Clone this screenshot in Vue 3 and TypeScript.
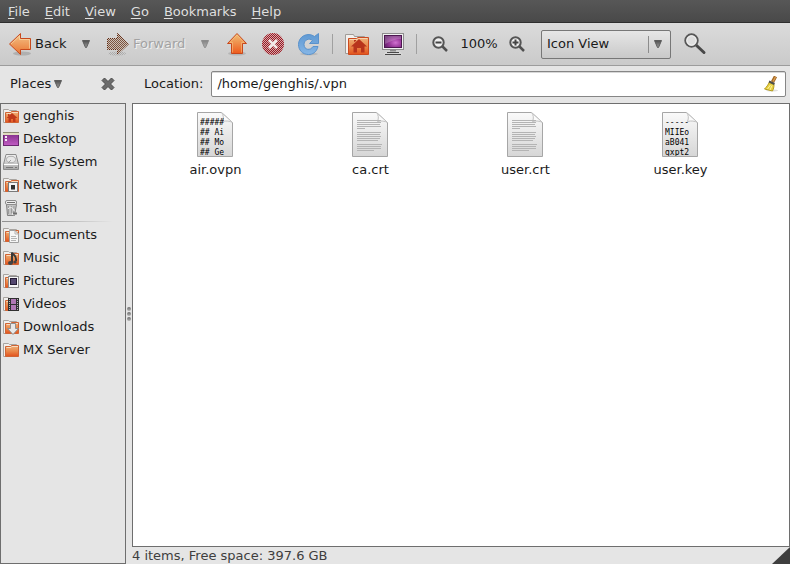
<script setup lang="ts">
import { ref } from 'vue'

interface Menu {
  key: string
  rest: string
}

interface Place {
  icon: string
  label: string
}

interface FileItem {
  name: string
  preview?: string[]
}

const menus: Menu[] = [
  { key: 'F', rest: 'ile' },
  { key: 'E', rest: 'dit' },
  { key: 'V', rest: 'iew' },
  { key: 'G', rest: 'o' },
  { key: 'B', rest: 'ookmarks' },
  { key: 'H', rest: 'elp' },
]

const placeGroups: Place[][] = [
  [
    { icon: 'home', label: 'genghis' },
    { icon: 'desktop', label: 'Desktop' },
    { icon: 'drive', label: 'File System' },
    { icon: 'network', label: 'Network' },
    { icon: 'trash', label: 'Trash' },
  ],
  [
    { icon: 'documents', label: 'Documents' },
    { icon: 'music', label: 'Music' },
    { icon: 'pictures', label: 'Pictures' },
    { icon: 'videos', label: 'Videos' },
    { icon: 'downloads', label: 'Downloads' },
    { icon: 'folder', label: 'MX Server' },
  ],
]

const files: FileItem[] = [
  { name: 'air.ovpn', preview: ['#####', '## Ai', '## Mo', '## Ge'] },
  { name: 'ca.crt' },
  { name: 'user.crt' },
  { name: 'user.key', preview: ['-----', 'MIIEo', 'aB041', 'gxpt2'] },
]

const textLines: number[][] = [
  [8, 24], [10, 24], [12, 23], [14, 24], [16, 8],
  [20, 24], [22, 23], [24, 24], [26, 23], [28, 21],
  [32, 25], [34, 24], [36, 24], [38, 17],
]

const location = ref('/home/genghis/.vpn')
const view = ref('Icon View')
const noFolder = ['desktop', 'drive', 'trash']
</script>

<template>
  <div class="window">
    <svg class="defs" width="0" height="0" aria-hidden="true">
      <defs>
        <linearGradient id="orange" x1="0" y1="0" x2="0" y2="1">
          <stop offset="0" stop-color="#f0c078" />
          <stop offset="1" stop-color="#ee5a1c" />
        </linearGradient>
        <linearGradient id="orangeSoft" x1="0" y1="0" x2="0" y2="1">
          <stop offset="0" stop-color="#f3c48a" />
          <stop offset="1" stop-color="#ea7430" />
        </linearGradient>
        <linearGradient id="folderFront" x1="0" y1="0" x2="0" y2="1">
          <stop offset="0" stop-color="#eeb27c" />
          <stop offset="0.5" stop-color="#ea8a4c" />
          <stop offset="1" stop-color="#e2511c" />
        </linearGradient>
        <linearGradient id="blue" x1="0" y1="0" x2="0" y2="1">
          <stop offset="0" stop-color="#5e98d2" />
          <stop offset="1" stop-color="#86b6e6" />
        </linearGradient>
        <radialGradient id="purple" cx="0.65" cy="0.6" r="0.7">
          <stop offset="0" stop-color="#d070d0" />
          <stop offset="0.5" stop-color="#9a3a9c" />
          <stop offset="1" stop-color="#62206a" />
        </radialGradient>
        <linearGradient id="desk" x1="0" y1="0" x2="0" y2="1">
          <stop offset="0" stop-color="#7c2c84" />
          <stop offset="1" stop-color="#c25cc4" />
        </linearGradient>
        <linearGradient id="caret" x1="0" y1="0" x2="0" y2="1">
          <stop offset="0" stop-color="#4e4e4e" />
          <stop offset="1" stop-color="#9e9e9e" />
        </linearGradient>
        <linearGradient id="page" x1="0" y1="0" x2="0" y2="1">
          <stop offset="0" stop-color="#fafafa" />
          <stop offset="1" stop-color="#d6d6d6" />
        </linearGradient>
        <linearGradient id="metal" x1="0" y1="0" x2="0" y2="1">
          <stop offset="0" stop-color="#f4f4f4" />
          <stop offset="1" stop-color="#a8a8a8" />
        </linearGradient>
        <pattern id="checker" width="2" height="2" patternUnits="userSpaceOnUse">
          <path d="M0 0h1v1H0zM1 1h1v1H1z" fill="#fff" shape-rendering="crispEdges" />
        </pattern>
        <mask id="dither" maskUnits="userSpaceOnUse" x="0" y="0" width="24" height="24">
          <rect width="24" height="24" fill="url(#checker)" />
        </mask>
      </defs>
    </svg>

    <nav class="menubar">
      <button v-for="m in menus" :key="m.rest" type="button" class="menu"><u>{{ m.key }}</u>{{ m.rest }}</button>
    </nav>

    <div class="toolbar">
      <button type="button" class="tool labelled back">
        <svg width="24" height="24" viewBox="0 0 24 24">
          <ellipse cx="14" cy="21.5" rx="9" ry="2" fill="#000" opacity="0.15" />
          <path d="M1.5 12 12.5 1.500V6.500H22.500V17.500H12.500V22.500Z" fill="url(#orangeSoft)" stroke="#c8481c" stroke-linejoin="round" />
          <path d="M3 12 11.500 4V7.500H21.500V16.500" fill="none" stroke="#f8d8a8" opacity="0.7" />
        </svg>
        Back
      </button>
      <button type="button" class="tool drop" aria-label="Back history">
        <svg width="10" height="10" viewBox="0 0 10 10"><path d="M1.500 1.500h7L5.500 8.500h-1z" fill="url(#caret)" stroke="#5c5c5c" stroke-linejoin="round" /></svg>
      </button>
      <button type="button" class="tool labelled forward" disabled>
        <svg width="24" height="24" viewBox="0 0 24 24">
          <path d="M22.500 12 11.500 1.500V6.500H1.500V17.500H11.500V22.500Z" fill="#c8b4a4" opacity="0.6" />
          <g mask="url(#dither)">
            <ellipse cx="11" cy="21.500" rx="9" ry="2" fill="#888" opacity="0.5" />
            <path d="M22.500 12 11.500 1.500V6.500H1.500V17.500H11.500V22.500Z" fill="#7c5440" stroke="#602810" stroke-linejoin="round" />
          </g>
        </svg>
        Forward
      </button>
      <button type="button" class="tool drop faded" aria-label="Forward history" disabled>
        <svg width="10" height="10" viewBox="0 0 10 10"><path d="M1.500 1.500h7L5.500 8.500h-1z" fill="url(#caret)" stroke="#5c5c5c" stroke-linejoin="round" /></svg>
      </button>
      <button type="button" class="tool up" aria-label="Up">
        <svg width="24" height="24" viewBox="0 0 24 24">
          <ellipse cx="12" cy="21.500" rx="9" ry="2" fill="#000" opacity="0.12" />
          <path d="M12 1.500 2.500 11.500H6.500V21.500H17.500V11.500H21.500Z" fill="url(#orange)" stroke="#c8481c" stroke-linejoin="round" />
          <path d="M7.500 20.500V10.500H5L12 3l7 7.500H16.500V20.500" fill="none" stroke="#f8d090" opacity="0.5" />
        </svg>
      </button>
      <button type="button" class="tool" aria-label="Stop" disabled>
        <svg width="24" height="24" viewBox="0 0 24 24">
          <circle cx="12" cy="12" r="11" fill="#d89090" opacity="0.6" />
          <g mask="url(#dither)">
            <circle cx="12" cy="12" r="11" fill="#981824" />
          </g>
          <path d="M8 8l8 8M16 8l-8 8" stroke="#f2e8e8" stroke-width="2.500" />
        </svg>
      </button>
      <button type="button" class="tool" aria-label="Reload">
        <svg width="24" height="24" viewBox="0 0 24 24">
          <ellipse cx="12" cy="22" rx="9" ry="1.500" fill="#000" opacity="0.1" />
          <path d="M17.500 4.500 21.500 1.500V11.500H12.500L15.500 8.500C12 5.500 7 8 7 12.500C7 18 13.500 19 16 14.500H21C19.500 20.500 15.500 22.500 11.500 22.500C5.500 22.500 1.500 18 1.500 12.500C1.500 4.500 10.500-.5 17.500 4.500Z" fill="url(#blue)" stroke="#5a92cc" stroke-linejoin="round" />
        </svg>
      </button>
      <span class="divider"></span>
      <button type="button" class="tool" aria-label="Home">
        <svg width="24" height="24" viewBox="0 0 24 24">
          <path d="M.5 21.500V2.500H8.500L9.500 4.500H19.500V8H4V21.500Z" fill="#f2f0ee" stroke="#a09c98" />
          <path d="M3.500 22.500V6.500H11.500L13 5.500H23.500V22.500Z" fill="url(#folderFront)" stroke="#cc4a20" />
          <path d="M4.500 7.500H12L13.500 6.500H22.500" fill="none" stroke="#f6d4b0" />
          <path d="M14 7 6 14.500H8.500V20.500H12V16H16V20.500H19.500V14.500H22Z" fill="#b8341c" />
          <path d="M9 10V8h2v1" fill="#b8341c" />
        </svg>
      </button>
      <button type="button" class="tool" aria-label="Computer">
        <svg width="24" height="24" viewBox="0 0 24 24">
          <rect x="1.500" y="1.500" width="21" height="16" fill="#f0f0f0" stroke="#8e8e8e" />
          <rect x="3.500" y="3.500" width="17" height="12" fill="url(#purple)" stroke="#4c1650" />
          <path d="M4 4h16v3C14 7 10 9 4 12Z" fill="#fff" opacity="0.2" />
          <path d="M9 18h6v2H9z" fill="#8c8c8c" />
          <path d="M5 19.500h14l3 3.500H2z" fill="#d8d8d8" />
          <path d="M6 20.500h12M4 22.500h16" stroke="#484848" />
        </svg>
      </button>
      <span class="divider"></span>
      <button type="button" class="tool zoom-out" aria-label="Zoom out">
        <svg width="16" height="16" viewBox="0 0 16 16">
          <path d="M10.500 10.500 15 15" stroke="#505050" stroke-width="2.500" />
          <circle cx="6.500" cy="6.500" r="5.200" fill="#f0f0f0" stroke="#555" stroke-width="2" />
          <path d="M3.500 6.500h6" stroke="#444" stroke-width="2" />
        </svg>
      </button>
      <button type="button" class="tool zoom-level">100%</button>
      <button type="button" class="tool zoom-in" aria-label="Zoom in">
        <svg width="16" height="16" viewBox="0 0 16 16">
          <path d="M10.500 10.500 15 15" stroke="#505050" stroke-width="2.500" />
          <circle cx="6.500" cy="6.500" r="5.200" fill="#f0f0f0" stroke="#555" stroke-width="2" />
          <path d="M3.500 6.500h6M6.500 3.500v6" stroke="#444" stroke-width="2" />
        </svg>
      </button>
      <span class="combo">
        <select v-model="view" aria-label="View">
          <option>Icon View</option>
          <option>List View</option>
          <option>Compact View</option>
        </select>
        <span class="combo-arrow">
          <svg width="10" height="10" viewBox="0 0 10 10"><path d="M1.500 1.500h7L5.500 8.500h-1z" fill="url(#caret)" stroke="#5c5c5c" stroke-linejoin="round" /></svg>
        </span>
      </span>
      <button type="button" class="tool search" aria-label="Search">
        <svg width="24" height="24" viewBox="0 0 24 24">
          <path d="M12.500 12.500 21 20.500" stroke="#484848" stroke-width="3" stroke-linecap="round" />
          <circle cx="8.500" cy="8.500" r="6.200" fill="#e2e2e2" stroke="#585858" stroke-width="2" />
          <circle cx="8.500" cy="8.500" r="4.700" fill="#dedede" stroke="#f6f6f6" />
        </svg>
      </button>
    </div>

    <div class="panes">
      <aside class="side">
        <header class="side-head">
          <button type="button" class="places">
            Places
            <svg width="10" height="10" viewBox="0 0 10 10"><path d="M1.500 1.500h7L5.500 8.500h-1z" fill="url(#caret)" stroke="#5c5c5c" stroke-linejoin="round" /></svg>
          </button>
          <button type="button" class="close" aria-label="Close side pane">
            <svg width="14" height="14" viewBox="0 0 14 14">
              <path d="M3.500 1 7 4.500 10.500 1 13 3.500 9.500 7 13 10.500 10.500 13 7 9.500 3.500 13 1 10.500 4.500 7 1 3.500Z" fill="#6c6c6c" stroke="#4a4a4a" stroke-linejoin="round" />
            </svg>
          </button>
        </header>
        <div class="places-list">
          <ul v-for="(group, g) in placeGroups" :key="g" class="group">
            <li v-for="p in group" :key="p.label">
              <a href="#" class="place">
                <svg width="16" height="16" viewBox="0 0 16 16">
                  <template v-if="!noFolder.includes(p.icon)">
                    <path d="M.5 14.500V1.500H5.500L6.500 2.500H13.500V5H3V14.500Z" fill="#f0efed" stroke="#a8a4a0" />
                    <path d="M2.500 14.500V4.500H7.500L8.500 3.500H15.500V14.500Z" fill="url(#folderFront)" stroke="#d06434" />
                    <path d="M3.500 5.500H8L9 4.500h6" fill="none" stroke="#f8dcc0" />
                  </template>
                  <template v-if="p.icon === 'home'">
                    <path d="M9 5 3.500 10H5.500V14H8V11h2v3h2.500v-4H14.500Z" fill="#c03a1c" />
                    <path d="M5 6h1.500v2H5z" fill="#c03a1c" />
                  </template>
                  <template v-else-if="p.icon === 'desktop'">
                    <rect x=".5" y="1.500" width="15" height="13" fill="url(#desk)" stroke="#6a2870" />
                    <path d="M0 1h16v3H0z" fill="#e0dcc0" />
                    <path d="M0 1.500h16" stroke="#8c8a74" />
                    <path d="M2 5h2v2H2zM2 8h2v2H2z" fill="#f4ecf4" />
                  </template>
                  <template v-else-if="p.icon === 'drive'">
                    <path d="M3 .5h10L15.500 10.500V15.500H.5V10.500Z" fill="url(#metal)" stroke="#8c8c8c" stroke-linejoin="round" />
                    <ellipse cx="8" cy="5.500" rx="4.500" ry="3.200" fill="#e8e8e8" stroke="#b0b0b0" />
                    <path d="M8 6 5 9" stroke="#a0a0a0" />
                    <path d="M1 10.500h14" stroke="#fff" />
                    <path d="M3 13.500h7M12 13.500h2" stroke="#787878" />
                  </template>
                  <template v-else-if="p.icon === 'network'">
                    <rect x="5.500" y="5.500" width="9" height="9" fill="#f4f4f4" stroke="#7a7a7a" />
                    <rect x="8" y="8" width="4" height="4" fill="#303030" />
                    <path d="M8 12h4v1H8z" fill="#888" />
                  </template>
                  <template v-else-if="p.icon === 'trash'">
                    <path d="M3.500 4.500 4.500 15.500H11.500L13.500 4.500Z" fill="#c4c4c4" stroke="#808080" />
                    <path d="M5.500 6v8M8.500 6v8M11 6l-.5 7" stroke="#9c9c9c" />
                    <rect x="2.500" y=".5" width="11" height="4" rx="1.500" fill="#ececec" stroke="#8c8c8c" />
                    <path d="M4 2.500h8" stroke="#707070" />
                    <path d="M5 9c2-3 6-1 6 2M13 13l-3 2-1-2" stroke="#f2f2f2" fill="none" />
                    <path d="M10 12.500h4v2h-4z" fill="#707070" />
                  </template>
                  <template v-else-if="p.icon === 'documents'">
                    <path d="M6.500 3.500H12L15.500 7V15.500H6.500Z" fill="#f6f6f6" stroke="#a0a0a0" />
                    <path d="M12 3.500V7h3.500M8 9.500h5M8 11.500h6M8 13.500h5" fill="none" stroke="#b4b4b4" />
                  </template>
                  <template v-else-if="p.icon === 'music'">
                    <path d="M9 13V2.500C10 5.500 14 5 13 11" fill="none" stroke="#383838" stroke-width="2" />
                    <ellipse cx="7.500" cy="13" rx="2.500" ry="2" fill="#444" />
                    <ellipse cx="12" cy="12" rx="1.700" ry="1.500" fill="#444" />
                  </template>
                  <template v-else-if="p.icon === 'pictures'">
                    <rect x="5.500" y="3.500" width="10" height="11" fill="#f6f6f6" stroke="#8c8c8c" />
                    <rect x="7.500" y="5.500" width="6" height="6" fill="#544870" stroke="#241c34" />
                  </template>
                  <template v-else-if="p.icon === 'videos'">
                    <rect x="5" y="2" width="11" height="13" fill="#303030" />
                    <path d="M8 3h5v5H8zM8 9h5v5H8z" fill="#b078b4" />
                    <path d="M6.500 3v12M14.500 3v12" stroke="#b4b4b4" stroke-dasharray="1 1" />
                  </template>
                  <template v-else-if="p.icon === 'downloads'">
                    <path d="M7.500 4.500H12.500V9.500H15.500L10 15.500 4.500 9.500H7.500Z" fill="#e8e8e8" stroke="#909090" stroke-linejoin="round" />
                  </template>
                </svg>
                {{ p.label }}
              </a>
            </li>
          </ul>
        </div>
      </aside>

      <div class="splitter"><i></i><i></i><i></i></div>

      <main class="content">
        <div class="location-row">
          <label for="location">Location:</label>
          <div class="field">
            <input id="location" v-model="location" type="text" spellcheck="false" />
            <button type="button" class="clear" aria-label="Clear">
              <svg width="16" height="16" viewBox="0 0 16 16">
                <ellipse cx="9" cy="14.500" rx="6" ry="1" fill="#000" opacity="0.12" />
                <path d="M12.500.5 9.500 6" stroke="#a06420" stroke-width="3.500" />
                <path d="M12.500 1 10 5.500" stroke="#d89c50" stroke-width="1.500" />
                <path d="M6.500 6 11 8.500C11 11 10.500 13 9.500 15L1.500 13C3.500 11 5 9 6.500 6Z" fill="#e8d040" stroke="#b49c20" stroke-linejoin="round" />
                <path d="M7.500 9 4.500 13M9 9.500 7 14" stroke="#fcf4a0" />
                <path d="M6 5.500 11.500 8" stroke="#505048" stroke-width="2" />
              </svg>
            </button>
          </div>
        </div>

        <div class="files">
          <a v-for="f in files" :key="f.name" href="#" class="file">
            <span class="thumb">
              <svg width="36" height="46" viewBox="0 0 36 46">
                <path d="M.5.5H24.500L35.500 10.500V44.500H.5Z" fill="url(#page)" stroke="#a6a6a6" />
                <path d="M24.500.5C26.500 3 27 6 25.500 9.500C29 8.500 33 9 35.500 10.500Z" fill="#fbfbfb" stroke="#c0c0c0" stroke-linejoin="round" />
                <template v-if="!f.preview">
                  <path v-for="l in textLines" :key="l[0]" :d="`M5 ${l[0] + 0.5}h${l[1]}`" stroke="#b4b4b4" />
                </template>
              </svg>
              <span v-if="f.preview" class="preview"><span v-for="line in f.preview" :key="line">{{ line }}</span></span>
            </span>
            {{ f.name }}
          </a>
        </div>

        <footer class="status">
          <span>4 items, Free space: 397.6 GB</span>
          <svg width="18" height="17" viewBox="0 0 18 17"><path d="M18 0V17H0Z" fill="#3e3e3e" /></svg>
        </footer>
      </main>
    </div>
  </div>
</template>

<style>
body {
  margin: 0;
  background: #e5e5e5;
}
</style>

<style scoped>
.window {
  display: flex;
  flex-direction: column;
  min-height: 100vh;
  font-family: "DejaVu Sans", sans-serif;
  font-size: 13px;
  line-height: 16px;
  color: #1a1a1a;
  background: #e5e5e5;
}

.defs {
  position: absolute;
}

svg {
  display: block;
  flex: none;
}

button,
input,
select {
  margin: 0;
  padding: 0;
  border: 0;
  background: none;
  font: inherit;
  color: inherit;
}

a {
  color: inherit;
  text-decoration: none;
}

.menubar {
  display: flex;
  height: 20px;
  padding-top: 2px;
  border-bottom: 1px solid #2e2e2e;
  background: linear-gradient(#575757, #494949);
  color: #dfdfdf;
}

.menu {
  padding: 0 7px 0 8px;
}

.menu u {
  text-underline-offset: 2px;
}

.toolbar {
  display: flex;
  align-items: center;
  height: 42px;
  border-bottom: 1px solid #9c9c9c;
  background: linear-gradient(#dbdbdb, #cacaca);
}

.tool {
  display: flex;
  flex: none;
  align-items: center;
  justify-content: center;
  width: 36px;
  height: 36px;
}

.labelled {
  justify-content: flex-start;
  gap: 3px;
  padding-left: 8px;
}

.back {
  width: 74px;
}

.forward {
  width: 95px;
  color: #a2a2a2;
  text-shadow: 1px 1px 0 #f2f2f2;
}

.drop {
  width: 24px;
}

.faded {
  opacity: 0.6;
}

.up {
  margin-left: 2px;
}

.divider {
  flex: none;
  width: 1px;
  height: 20px;
  margin: 0 6px 0 5px;
  background: #a0a0a0;
}

.zoom-out {
  width: 34px;
}

.zoom-level {
  width: 44px;
}

.zoom-in {
  width: 32px;
}

.combo {
  position: relative;
  display: flex;
  flex: none;
  width: 130px;
  margin: 0 6px 0 8px;
}

.combo select {
  width: 100%;
  height: 29px;
  padding: 0 26px 0 5px;
  appearance: none;
  border: 1px solid #777;
  border-radius: 2px;
  background: linear-gradient(#e6e6e6, #c9c9c9);
}

.combo-arrow {
  position: absolute;
  top: 6px;
  right: 0;
  display: flex;
  align-items: center;
  height: 17px;
  padding: 0 8px 0 4px;
  border-left: 1px solid #8c8c8c;
  pointer-events: none;
}

.panes {
  display: grid;
  flex: 1;
  grid-template-columns: 126px 6px minmax(0, 1fr);
}

.side,
.content {
  display: flex;
  flex-direction: column;
}

.side-head {
  display: flex;
  align-items: center;
  justify-content: space-between;
  height: 35px;
  padding: 0 11px 2px 10px;
}

.places {
  display: flex;
  align-items: center;
  gap: 2px;
}

.places-list {
  flex: 1;
  border: 1px solid #6e6e6e;
}

.group {
  margin: 0;
  padding: 0;
  list-style: none;
}

.group + .group::before {
  content: "";
  display: block;
  height: 1px;
  margin: 2px 12px 1px 1px;
  background: linear-gradient(90deg, #909090, #a8a8a8 40%, #e5e5e5);
}

.place {
  display: flex;
  align-items: center;
  gap: 4px;
  height: 23px;
  padding-left: 2px;
}

.splitter {
  display: flex;
  flex-direction: column;
  align-items: center;
  justify-content: center;
  gap: 1px;
  padding-bottom: 2px;
}

.splitter i {
  width: 4px;
  height: 4px;
  border-radius: 50%;
  background: linear-gradient(#6c6c6c, #b4b4b4);
}

.location-row {
  display: flex;
  align-items: center;
  gap: 8px;
  height: 35px;
  padding: 0 4px 2px 12px;
}

.field {
  display: flex;
  flex: 1;
  align-items: center;
  height: 24px;
  border: 1px solid #868686;
  border-radius: 2px;
  background: #fff;
  box-shadow: inset 0 1px 0 #d8d8d8;
}

.field input {
  flex: 1;
  min-width: 0;
  padding-left: 5px;
  outline: 0;
}

.clear {
  padding-right: 6px;
}

.files {
  display: grid;
  flex: 1;
  grid-template-columns: repeat(auto-fill, 155px);
  align-content: start;
  padding: 8px 5px;
  border: 1px solid #6e6e6e;
  background: #fff;
}

.file {
  display: flex;
  flex-direction: column;
  align-items: center;
  gap: 4px;
}

.thumb {
  position: relative;
  margin-right: 1px;
}

.preview {
  position: absolute;
  top: 6px;
  left: 3px;
  display: flex;
  flex-direction: column;
  height: 38px;
  overflow: hidden;
  font-family: "DejaVu Sans Mono", monospace;
  font-size: 8px;
  line-height: 10px;
  color: #000;
  white-space: pre;
}

.preview span {
  flex: none;
}

.status {
  display: flex;
  align-items: center;
  justify-content: space-between;
  height: 17px;
  color: #3e3e3e;
}
</style>
